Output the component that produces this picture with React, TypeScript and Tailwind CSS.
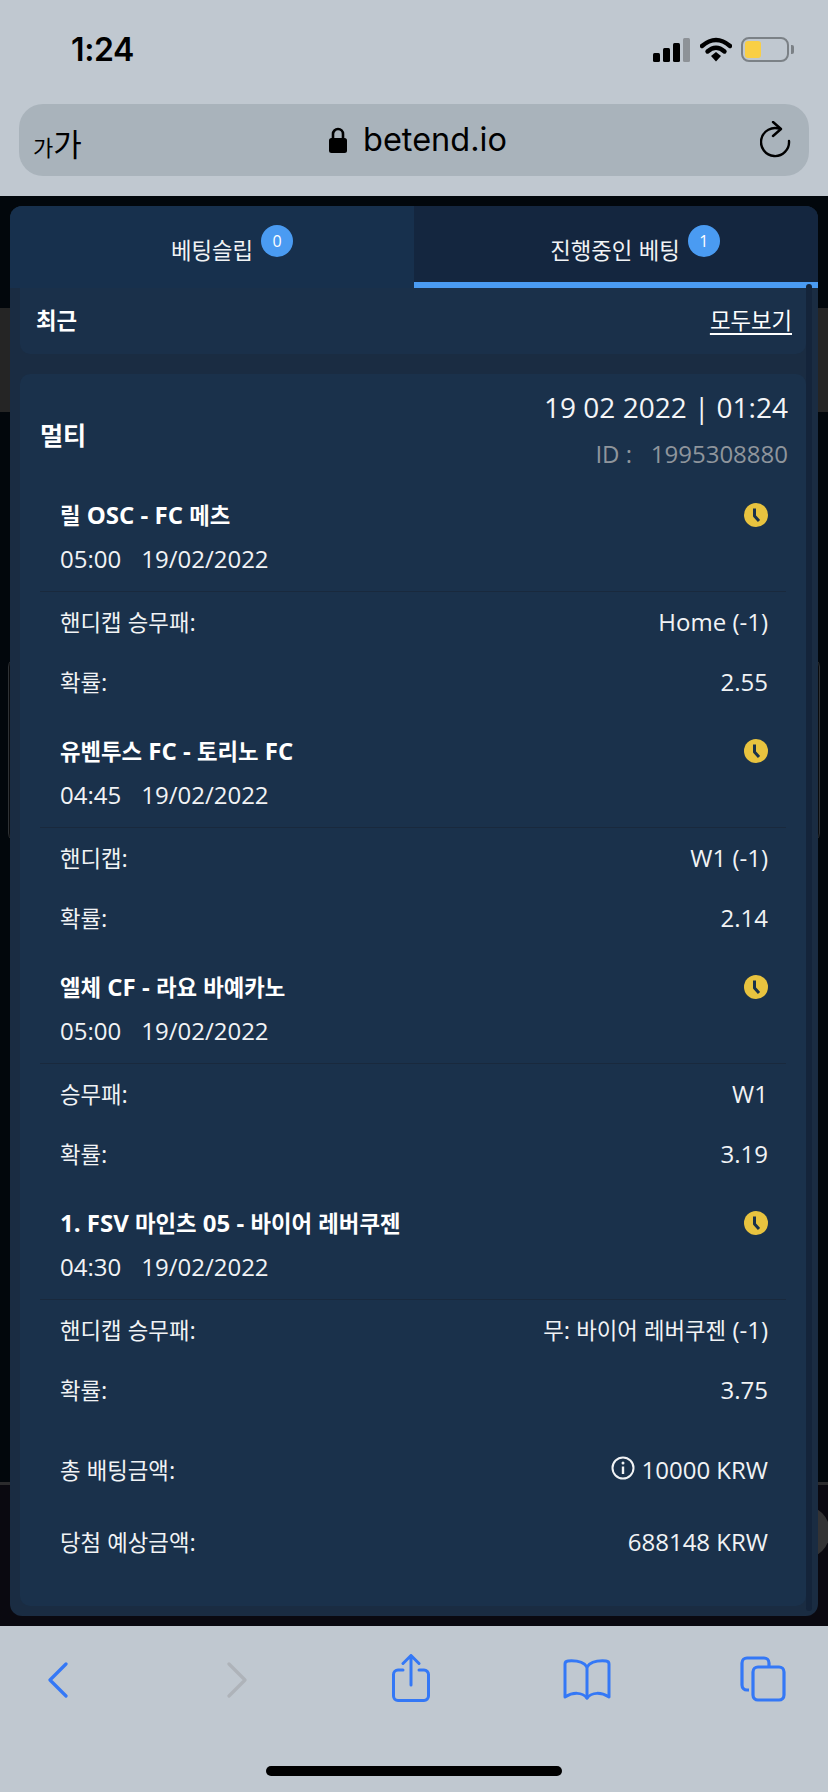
import React from "react";

function T({ text }: { text: string }) {
  const parts = text.split(/([가-힣]+)/);
  return (
    <>
      {parts.map((p, i) =>
        /[가-힣]/.test(p) ? (
          <span key={i} className="text-[0.93em]">{p}</span>
        ) : (
          <span key={i}>{p}</span>
        )
      )}
    </>
  );
}

function Clock() {
  return (
    <svg width="24" height="24" viewBox="0 0 24 24" className="shrink-0">
      <circle cx="12" cy="12" r="12" fill="#e8c33f" />
      <path d="M10.5 5.5 V13 L15 18" fill="none" stroke="#1a314b" strokeWidth="3" strokeLinejoin="round" />
    </svg>
  );
}

function Row({ label, value }: { label: string; value: string }) {
  return (
    <div className="h-[60px] flex items-center justify-between pl-[40px] pr-[38px] text-[24px] text-[#f1f3f5]">
      <div><T text={label} /></div>
      <div><T text={value} /></div>
    </div>
  );
}

function Match({ title, time, market, pick, odds }: { title: string; time: string; market: string; pick: string; odds: string }) {
  return (
    <div className="mb-[14px]">
      <div className="h-[50px] mb-[2px] flex items-center justify-between pl-[40px] pr-[38px] text-[24px] font-bold text-white">
        <div><T text={title} /></div>
        <Clock />
      </div>
      <div className="h-[34px] flex items-center pl-[40px] text-[24px] text-[#f1f3f5]">
        <span>{time}</span>
        <span className="ml-[20px]">19/02/2022</span>
      </div>
      <div className="mx-[20px] mt-[15px] h-[1px] bg-[#19293d]" />
      <Row label={market} value={pick} />
      <Row label="확률:" value={odds} />
    </div>
  );
}

function StatusBar() {
  return (
    <div className="h-[104px] pl-[71px] pr-[34px] flex items-start justify-between">
      <div className="mt-[29px] text-[32px] leading-[42px] font-semibold text-black font-['Inter','Liberation_Sans',sans-serif] tracking-[-0.4px]">1:24</div>
      <div className="mt-[37px] flex items-center">
        <svg width="37" height="24" viewBox="0 0 37 24">
          <rect x="0" y="15" width="7" height="9" rx="1.5" fill="#000" />
          <rect x="10" y="10" width="7" height="14" rx="1.5" fill="#000" />
          <rect x="20" y="5" width="7" height="19" rx="1.5" fill="#000" />
          <rect x="30" y="0" width="7" height="24" rx="1.5" fill="#8d9297" />
        </svg>
        <svg width="32" height="25" viewBox="0 0 32 25" className="ml-[10px]">
          <path d="M2 9 Q16 -3 30 9" fill="none" stroke="#000" strokeWidth="4.4" strokeLinecap="round" />
          <path d="M7.5 14.5 Q16 7 24.5 14.5" fill="none" stroke="#000" strokeWidth="4.4" strokeLinecap="round" />
          <path d="M11 19 L16 15 L21 19 L16 24.5 Z" fill="#000" />
        </svg>
        <div className="ml-[9px] w-[48px] h-[25px] rounded-[8px] border-[2px] border-[#7b8186] p-[2px]">
          <div className="w-[16px] h-full rounded-[3px] bg-[#f9cf45]" />
        </div>
        <div className="ml-[2px] w-[3px] h-[9px] rounded-r-[2px] bg-[#7b8186]" />
      </div>
    </div>
  );
}

function UrlBar() {
  return (
    <div className="mx-[19px] h-[72px] rounded-[24px] bg-[#a9b3bb] flex items-center text-black">
      <div className="ml-[14px] w-[52px] flex items-baseline font-['Noto_Sans_CJK_KR',sans-serif] leading-none mt-[4px] shrink-0">
        <span className="text-[22px]">가</span>
        <span className="text-[31px]">가</span>
      </div>
      <svg width="18" height="26" viewBox="0 0 18 26" className="ml-[244px] shrink-0">
        <path d="M4 12 V7 a5 5 0 0 1 10 0 V12" fill="none" stroke="#000" strokeWidth="2.6" />
        <rect x="0" y="11" width="18" height="15" rx="2.5" fill="#000" />
      </svg>
      <div className="ml-[16px] text-[32.5px] leading-none font-['Inter','Liberation_Sans',sans-serif] w-[142px] mt-[1px] shrink-0">betend.io</div>
      <svg width="32" height="38" viewBox="0 0 32 38" className="ml-[255px] shrink-0" fill="none" stroke="#000" strokeWidth="2.4" strokeLinecap="round" strokeLinejoin="round">
        <path d="M20 8 A14 14 0 1 0 29 20" />
        <path d="M13 1 L21 8 L13 15" />
      </svg>
    </div>
  );
}

function Tab({ label, count, active }: { label: string; count: string; active?: boolean }) {
  return (
    <div className={active ? "w-1/2 h-[82px] bg-[#14263f] border-b-[6px] border-[#4a9bf2] flex justify-center pl-[38px]" : "w-1/2 h-[82px] bg-[#17304d] flex justify-center pl-[40px]"}>
      <div className="mt-[28px] text-[24px] leading-[32px] text-[#f1f3f5] h-[32px]"><T text={label} /></div>
      <div className="ml-[8px] mt-[19px] w-[32px] h-[32px] rounded-full bg-[#4a9bf2] flex items-center justify-center text-[16px] text-white">{count}</div>
    </div>
  );
}

function Modal() {
  return (
    <div className="absolute left-[10px] top-[206px] w-[808px] h-[1410px] rounded-[12px] bg-[#1a2c42] overflow-hidden font-['Open_Sans','Noto_Sans_CJK_KR',sans-serif]">
      <div className="flex">
        <Tab label="베팅슬립" count="0" />
        <Tab label="진행중인 베팅" count="1" active />
      </div>
      <div className="absolute right-[6px] top-[78px] bottom-[5px] w-[6px] rounded-full bg-[#14243a]" />
      <div className="ml-[10px] w-[786px] h-[66px] rounded-b-[10px] bg-[#1a304a] flex items-center justify-between pl-[16px] pr-[14px] text-[24px] text-white pb-[2px]">
        <div className="font-bold"><T text="최근" /></div>
        <div className="underline underline-offset-4"><T text="모두보기" /></div>
      </div>
      <div className="ml-[10px] mt-[20px] w-[786px] h-[1232px] rounded-[10px] bg-[#1a314b]">
        <div className="h-[116px] flex justify-between pl-[20px] pr-[18px]">
          <div className="mt-[40px] text-[27px] leading-[42px] font-bold text-white"><T text="멀티" /></div>
          <div className="text-right">
            <div className="mt-[11px] text-[28px] leading-[44px] text-[#f4f5f7]">19 02 2022 | 01:24</div>
            <div className="mt-[9px] text-[24px] leading-[32px] text-[#8f959c]">ID :&nbsp;&nbsp;&nbsp;1995308880</div>
          </div>
        </div>
        <Match title="릴 OSC - FC 메츠" time="05:00" market="핸디캡 승무패:" pick="Home (-1)" odds="2.55" />
        <Match title="유벤투스 FC - 토리노 FC" time="04:45" market="핸디캡:" pick="W1 (-1)" odds="2.14" />
        <Match title="엘체 CF - 라요 바예카노" time="05:00" market="승무패:" pick="W1" odds="3.19" />
        <Match title="1. FSV 마인츠 05 - 바이어 레버쿠젠" time="04:30" market="핸디캡 승무패:" pick="무: 바이어 레버쿠젠 (-1)" odds="3.75" />
        <div className="h-[72px] mt-[2px] flex items-center justify-between pl-[40px] pr-[38px] text-[24px] text-[#f1f3f5]">
          <div><T text="총 배팅금액:" /></div>
          <div className="flex items-center">
            <svg width="24" height="24" viewBox="0 0 24 24" className="mr-[6px] -mt-[4px]" fill="none" stroke="#f1f3f5" strokeWidth="2">
              <circle cx="12" cy="12" r="10.5" />
              <path d="M12 10.5 V18" strokeWidth="2.4" />
              <circle cx="12" cy="7" r="1.5" fill="#f1f3f5" stroke="none" />
            </svg>
            <span>10000 KRW</span>
          </div>
        </div>
        <div className="h-[72px] flex items-center justify-between pl-[40px] pr-[38px] text-[24px] text-[#f1f3f5]">
          <div><T text="당첨 예상금액:" /></div>
          <div>688148 KRW</div>
        </div>
      </div>
    </div>
  );
}

function Backdrop() {
  return (
    <div className="relative h-[1430px] bg-[#02070c] overflow-hidden font-['Noto_Sans_CJK_KR',sans-serif]">
      <div className="h-[112px]" />
      <div className="h-[104px] bg-[#252525]" />
      <div className="h-[245px]" />
      <div className="ml-[8px] mr-[8px] h-[186px] rounded-[10px] border border-[#2f3235] bg-[#0a0b0d]" />
      <div className="h-[639px]" />
      <div className="h-[3px] bg-[#2b2b2d]" />
      <div className="h-[141px] bg-[#0a0910]" />
      <div className="absolute left-[772px] top-[1309px] w-[58px] h-[54px] rounded-full bg-[#333335]" />
    </div>
  );
}

function BottomBar() {
  return (
    <div className="h-[166px] bg-[#c0c8d0] relative">
      <div className="flex items-start pt-[28px] pl-[48px]">
        <svg width="20" height="36" viewBox="0 0 20 36" className="mt-[8px]" fill="none" stroke="#3478f6" strokeWidth="3.2" strokeLinecap="round" strokeLinejoin="round">
          <path d="M18 2 L2 18 L18 34" />
        </svg>
        <svg width="20" height="36" viewBox="0 0 20 36" className="ml-[159px] mt-[8px]" fill="none" stroke="#aeb3b9" strokeWidth="3.2" strokeLinecap="round" strokeLinejoin="round">
          <path d="M2 2 L18 18 L2 34" />
        </svg>
        <svg width="38" height="48" viewBox="0 0 38 48" className="ml-[145px]" fill="none" stroke="#3478f6" strokeWidth="3" strokeLinecap="round" strokeLinejoin="round">
          <path d="M11 16 H6 a4.5 4.5 0 0 0 -4.5 4.5 V42 a4.5 4.5 0 0 0 4.5 4.5 H32 a4.5 4.5 0 0 0 4.5 -4.5 V20.5 a4.5 4.5 0 0 0 -4.5 -4.5 H27" />
          <path d="M19 31 V2 M11 9.5 L19 1.5 L27 9.5" />
        </svg>
        <svg width="48" height="42" viewBox="0 0 48 42" className="ml-[133px] mt-[5px]" fill="none" stroke="#3478f6" strokeWidth="3" strokeLinecap="round" strokeLinejoin="round">
          <path d="M24 8 C20 2 12 1.5 5 2 C3 2.2 2 3.5 2 5 V38 C10 33 19 33 24 39 C29 33 38 33 46 38 V5 C46 3.5 45 2.2 43 2 C36 1.5 28 2 24 8 Z" />
          <path d="M24 8 V39" />
        </svg>
        <svg width="46" height="46" viewBox="0 0 46 46" className="ml-[129px] mt-[2px]" fill="none" stroke="#3478f6" strokeWidth="3.2" strokeLinejoin="round">
          <path d="M9 34 H7 a5 5 0 0 1 -5 -5 V7 a5 5 0 0 1 5 -5 H24 a5 5 0 0 1 5 5 V11" />
          <rect x="13" y="11" width="31" height="33" rx="5" />
        </svg>
      </div>
      <div className="absolute left-[266px] bottom-[16px] w-[296px] h-[10px] rounded-full bg-black" />
    </div>
  );
}

export default function App() {
  return (
    <div className="relative w-[828px] h-[1792px] overflow-hidden bg-[#c0c8d0]">
      <div className="h-[196px] bg-[#c0c8d0]">
        <StatusBar />
        <UrlBar />
      </div>
      <Backdrop />
      <BottomBar />
      <Modal />
    </div>
  );
}
